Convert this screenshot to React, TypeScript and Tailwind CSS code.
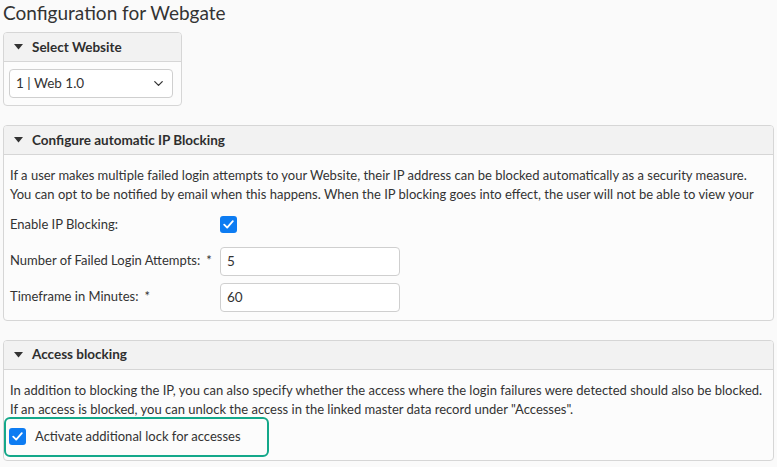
import { ChevronDown } from 'lucide-react';

const font = { fontFamily: 'Lato, "Noto Sans", sans-serif' };

const Caret = () => (
  <svg width="9" height="6" viewBox="0 0 9 6" className="mr-[9px] shrink-0">
    <path d="M0 0h9L4.5 5.5z" fill="#333" />
  </svg>
);

const Check = () => (
  <span className="flex h-[17px] w-[17px] shrink-0 items-center justify-center rounded-[3px] bg-[#0d7cf2]">
    <svg width="11" height="9" viewBox="0 0 11 9">
      <path d="M1.2 4.6l3 3 5.6-6.4" fill="none" stroke="#fff" strokeWidth="1.8" strokeLinecap="round" strokeLinejoin="round" />
    </svg>
  </span>
);

const PanelHeader = ({ title }: { title: string }) => (
  <div className="flex h-[29px] items-center border-b border-[#d6d6d6] bg-[#f2f2f2] pl-[10px] text-[13.5px] font-bold text-[#2e2e2e]">
    <Caret />
    {title}
  </div>
);

export default function App() {
  return (
    <div className="min-h-[467px] w-[777px] overflow-hidden bg-[#fafafa] text-[13px] text-[#333]" style={font}>
      <h1 className="pl-[3px] pt-[1px] text-[19px] leading-[24px] text-[#333]">Configuration for Webgate</h1>

      {/* Select Website */}
      <div className="ml-[3px] mt-[7px] w-[179px] overflow-hidden rounded-[4px] border border-[#d6d6d6] bg-[#fcfcfc]">
        <PanelHeader title="Select Website" />
        <div className="pb-[7px] pl-[5px] pr-[8px] pt-[7px]">
          <div className="flex h-[29px] items-center justify-between rounded-[4px] border border-[#cfcfcf] bg-white pl-[6px] pr-[6px] text-[13.5px]">
            <span>1 | Web 1.0</span>
            <ChevronDown size={15} strokeWidth={2} className="text-[#333]" />
          </div>
        </div>
      </div>

      {/* Configure automatic IP Blocking */}
      <div className="ml-[3px] mt-[19px] w-[771px] overflow-hidden rounded-[4px] border border-[#d6d6d6] bg-[#fcfcfc]">
        <PanelHeader title="Configure automatic IP Blocking" />
        <div className="whitespace-nowrap px-[6px] pb-[8px] pt-[11px]">
          <p className="leading-[19px]">
            If a user makes multiple failed login attempts to your Website, their IP address can be blocked automatically as a security measure.
            <br />
            You can opt to be notified by email when this happens. When the IP blocking goes into effect, the user will not be able to view your
          </p>
          <div className="mt-[11px] flex items-center">
            <span className="w-[210px]">Enable IP Blocking:</span>
            <Check />
          </div>
          <div className="mt-[12px] flex items-center">
            <span className="w-[210px]">
              Number of Failed Login Attempts:<span className="ml-[6px]">*</span>
            </span>
            <div className="flex h-[29px] w-[180px] items-center rounded-[4px] border border-[#cfcfcf] bg-white px-[6px] text-[13.5px]">5</div>
          </div>
          <div className="mt-[7px] flex items-center">
            <span className="w-[210px]">
              Timeframe in Minutes:<span className="ml-[6px]">*</span>
            </span>
            <div className="flex h-[29px] w-[180px] items-center rounded-[4px] border border-[#cfcfcf] bg-white px-[6px] text-[13.5px]">60</div>
          </div>
        </div>
      </div>

      {/* Access blocking */}
      <div className="ml-[3px] mt-[19px] w-[771px] overflow-hidden rounded-[4px] border border-[#d6d6d6] bg-[#fcfcfc]">
        <PanelHeader title="Access blocking" />
        <div className="whitespace-nowrap pb-[3px] pt-[11px]">
          <p className="px-[6px] leading-[19px]">
            In addition to blocking the IP, you can also specify whether the access where the login failures were detected should also be blocked.
            <br />
            If an access is blocked, you can unlock the access in the linked master data record under "Accesses".
          </p>
          <div className="-mt-[2px] flex h-[40px] w-[265px] items-center rounded-[6px] border-2 border-[#14a88a] pl-[3px]">
            <Check />
            <span className="ml-[9px]">Activate additional lock for accesses</span>
          </div>
        </div>
      </div>
    </div>
  );
}
